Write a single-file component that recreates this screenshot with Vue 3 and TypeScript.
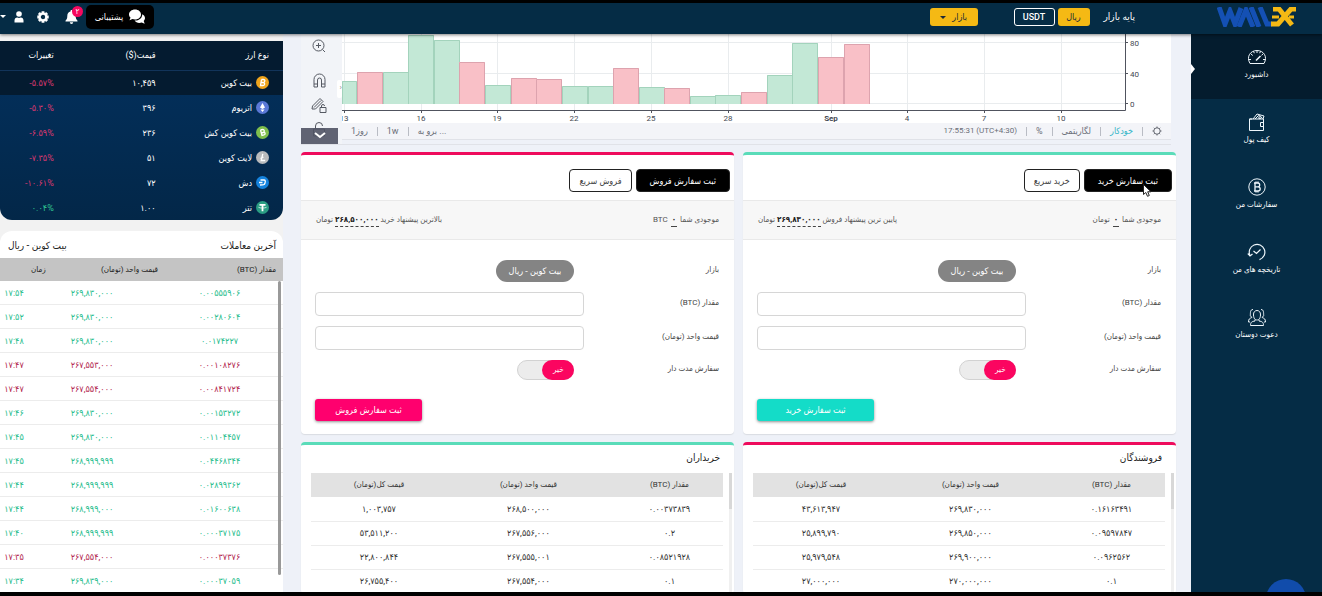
<script setup lang="ts">
import { ref } from 'vue'

interface Coin { id: string; name: string; price: string; change: string; up?: boolean; color: string }
interface Trade { amount: string; price: string; time: string; down?: boolean }
interface Bar { x: number; y: number; w?: number; down?: boolean }
interface OrderForm {
  id: string; kind: string; submit: string; quick: string; unit: string
  offerLabel: string; offer: string
}
interface Book { id: string; title: string; tone: string; rows: string[][] }

const menu = [
  { id: 'dash', label: 'داشبورد' },
  { id: 'wallet', label: 'کیف پول' },
  { id: 'orders', label: 'سفارشات من' },
  { id: 'history', label: 'تاریخچه های من' },
  { id: 'invite', label: 'دعوت دوستان' },
]

const coins: Coin[] = [
  { id: 'btc', name: 'بیت کوین', price: '۱۰,۴۵۹', change: '-۵.۵۷%', color: '#f0a51c' },
  { id: 'eth', name: 'اتریوم', price: '۳۹۶', change: '-۵.۳۰%', color: '#5a78d6' },
  { id: 'bch', name: 'بیت کوین کش', price: '۲۳۶', change: '-۶.۵۹%', color: '#7fbf4d' },
  { id: 'ltc', name: 'لایت کوین', price: '۵۱', change: '-۷.۳۵%', color: '#b9bbbd' },
  { id: 'dash', name: 'دش', price: '۷۲', change: '-۱۰.۶۱%', color: '#1583dd' },
  { id: 'usdt', name: 'تتر', price: '۱.۰۰', change: '۰.۰۴%', up: true, color: '#2a9d83' },
]

const trades: Trade[] = [
  { amount: '۰.۰۰۵۵۵۹۰۶', price: '۲۶۹,۸۳۰,۰۰۰', time: '۱۷:۵۴' },
  { amount: '۰.۰۰۲۸۰۶۰۴', price: '۲۶۹,۸۳۰,۰۰۰', time: '۱۷:۵۲' },
  { amount: '۰.۰۱۷۴۲۲۷', price: '۲۶۹,۸۳۰,۰۰۰', time: '۱۷:۴۸' },
  { amount: '۰.۰۰۱۰۸۲۷۶', price: '۲۶۷,۵۵۳,۰۰۰', time: '۱۷:۴۷', down: true },
  { amount: '۰.۰۰۸۴۱۷۲۴', price: '۲۶۷,۵۵۴,۰۰۰', time: '۱۷:۴۷', down: true },
  { amount: '۰.۰۰۱۵۳۲۷۲', price: '۲۶۹,۸۳۰,۰۰۰', time: '۱۷:۴۶' },
  { amount: '۰.۰۱۱۰۴۴۵۷', price: '۲۶۹,۸۳۰,۰۰۰', time: '۱۷:۴۵' },
  { amount: '۰.۰۴۴۶۸۳۴۴', price: '۲۶۸,۹۹۹,۹۹۹', time: '۱۷:۴۵' },
  { amount: '۰.۰۲۸۹۹۳۶۲', price: '۲۶۸,۹۹۹,۹۹۹', time: '۱۷:۴۴' },
  { amount: '۰.۰۱۶۰۰۶۳۸', price: '۲۶۸,۹۹۹,۰۰۰', time: '۱۷:۴۴' },
  { amount: '۰.۰۰۰۳۷۱۷۵', price: '۲۶۸,۹۹۹,۹۹۹', time: '۱۷:۴۰' },
  { amount: '۰.۰۰۰۳۷۳۷۶', price: '۲۶۷,۵۵۴,۰۰۰', time: '۱۷:۳۵', down: true },
  { amount: '۰.۰۰۰۳۷۰۵۹', price: '۲۶۹,۸۳۹,۰۰۰', time: '۱۷:۳۴' },
]

const baseline = 70
const barWidth = 26
const bars: Required<Bar>[] = ([
  { x: 0, y: 47, w: 15 }, { x: 15, y: 38, down: true }, { x: 41, y: 38 }, { x: 66, y: 1 },
  { x: 92, y: 6 }, { x: 117, y: 28, down: true }, { x: 143, y: 51 }, { x: 169, y: 44, down: true },
  { x: 194, y: 45, down: true }, { x: 220, y: 52 }, { x: 246, y: 52 }, { x: 271, y: 34, down: true },
  { x: 297, y: 53 }, { x: 322, y: 54, down: true }, { x: 348, y: 62 }, { x: 373, y: 61 },
  { x: 399, y: 58, down: true }, { x: 425, y: 41 }, { x: 450, y: 9 }, { x: 476, y: 23, down: true },
  { x: 502, y: 10, down: true },
] as Bar[]).map(b => ({ w: barWidth, down: false, ...b }))
const days = [
  { x: 2, t: '13' }, { x: 79, t: '16' }, { x: 155, t: '19' }, { x: 232, t: '22' }, { x: 309, t: '25' },
  { x: 386, t: '28' }, { x: 489, t: 'Sep' }, { x: 565, t: '4' }, { x: 642, t: '7' }, { x: 719, t: '10' },
]
const levels = [{ y: 9, t: '80' }, { y: 40, t: '40' }, { y: 70, t: '0' }]

const forms: OrderForm[] = [
  { id: 'buy', kind: 'ثبت سفارش خرید', submit: 'ثبت سفارش خرید', quick: 'خرید سریع', unit: 'تومان', offerLabel: 'پایین ترین پیشنهاد فروش', offer: '۲۶۹,۸۳۰,۰۰۰' },
  { id: 'sell', kind: 'ثبت سفارش فروش', submit: 'ثبت سفارش فروش', quick: 'فروش سریع', unit: 'BTC', offerLabel: 'بالاترین پیشنهاد خرید', offer: '۲۶۸,۵۰۰,۰۰۰' },
]

const books: Book[] = [
  {
    id: 'sellers', title: 'فروشندگان', tone: 'pink', rows: [
      ['۰.۱۶۱۶۳۴۹۱', '۲۶۹,۸۳۰,۰۰۰', '۴۳,۶۱۳,۹۴۷'],
      ['۰.۰۹۵۹۷۸۴۷', '۲۶۹,۸۵۰,۰۰۰', '۲۵,۸۹۹,۷۹۰'],
      ['۰.۰۹۶۲۵۶۲', '۲۶۹,۹۰۰,۰۰۰', '۲۵,۹۷۹,۵۴۸'],
      ['۰.۱', '۲۷۰,۰۰۰,۰۰۰', '۲۷,۰۰۰,۰۰۰'],
    ],
  },
  {
    id: 'buyers', title: 'خریداران', tone: 'teal', rows: [
      ['۰.۰۰۳۷۳۸۳۹', '۲۶۸,۵۰۰,۰۰۰', '۱,۰۰۳,۷۵۷'],
      ['۰.۲', '۲۶۷,۵۵۶,۰۰۰', '۵۳,۵۱۱,۲۰۰'],
      ['۰.۰۸۵۲۱۹۲۸', '۲۶۷,۵۵۵,۰۰۱', '۲۲,۸۰۰,۸۴۴'],
      ['۰.۱', '۲۶۷,۵۵۴,۰۰۰', '۲۶,۷۵۵,۴۰۰'],
    ],
  },
]

const timed = ref<Record<string, boolean>>({ buy: false, sell: false })
</script>

<template>
  <div class="page" dir="rtl">
    <header class="topbar">
      <a class="brand" href="#" aria-label="Wallex">
        <svg width="80" height="20" viewBox="0 0 80 20" fill="none" stroke-width="5">
          <g stroke="#1450b4">
            <path d="M2 0 8 17 13 4 18 17 24 1" />
            <path d="M22 20 29 3 36 20" />
            <path d="M34 0 42 20M43 0 50 17H55" />
          </g>
          <g stroke="#f5b914">
            <path d="M56 2H62L75 18" />
            <path d="M79 2H74L61 17H54" />
            <path d="M55 10H62M72 10H77" stroke-width="3" />
          </g>
        </svg>
      </a>
      <span class="base-label">پایه بازار</span>
      <button class="chip gold rial" type="button">ریال</button>
      <button class="chip outline" type="button">USDT</button>
      <button class="chip gold market" type="button">بازار <i class="caret"></i></button>
      <div class="tools">
        <button class="support" type="button">
          <svg width="16" height="16" viewBox="0 0 16 16" fill="#fff">
            <path d="M6 .5C9.500.5 12 2.700 12 5.500S9.500 10.500 6 10.500C5 10.500 4.200 10.300 3.500 10L.5 11.200 1.500 8.600C.6 7.700 0 6.700 0 5.500 0 2.700 2.600.5 6 .5Z" />
            <path d="M13.200 5.200C14.900 6 16 7.400 16 9c0 1.100-.5 2.200-1.300 3l1 2.700-3-1.200c-.7.3-1.500.4-2.400.4-2 0-3.800-.9-4.700-2.300C10 11.800 13.400 9 13.200 5.200Z" />
          </svg>
          پشتیبانی
        </button>
        <button class="icon-btn bell" type="button" aria-label="اعلان‌ها">
          <svg width="13" height="14" viewBox="0 0 13 14" fill="#fff">
            <path d="M6.500 0C7.100 0 7.500.4 7.500 1v.6C9.500 2 10.700 3.700 10.700 6c0 2.600.8 3.600 1.800 4.700v.8H.5v-.8C1.500 9.600 2.300 8.600 2.300 6c0-2.300 1.200-4 3.200-4.400V1c0-.6.4-1 1-1ZM4.800 12.300h3.400a1.700 1.700 0 0 1-3.400 0Z" />
          </svg>
          <span class="badge">۲</span>
        </button>
        <button class="icon-btn gear" type="button" aria-label="تنظیمات">
          <svg width="12" height="12" viewBox="0 0 12 12" fill="none" stroke="#fff">
            <circle cx="6" cy="6" r="3.400" stroke-width="2.400" />
            <path d="M6 .3V2M6 10V11.700M.3 6H2M10 6H11.700M1.900 1.900 3.200 3.200M8.800 8.800 10.100 10.100M10.100 1.900 8.800 3.200M3.200 8.800 1.900 10.100" stroke-width="2.800" />
          </svg>
        </button>
        <button class="icon-btn user" type="button" aria-label="حساب کاربری">
          <svg width="10" height="12" viewBox="0 0 10 12" fill="#fff">
            <circle cx="5" cy="3" r="2.800" />
            <path d="M.5 11.500V9.500C.5 7.600 1.700 6.500 3.200 6.500 4.300 7 5.700 7 6.800 6.500 8.300 6.500 9.500 7.600 9.500 9.500V11.500Z" />
          </svg>
          <i class="caret"></i>
        </button>
      </div>
    </header>

    <div class="shell">
      <nav class="sidebar">
        <a v-for="(m, i) in menu" :key="m.id" href="#" class="nav-item" :class="{ active: i === 0 }">
          <svg width="20" height="18" viewBox="0 0 20 18" fill="none" stroke="#eef6fb" stroke-width="1">
            <g v-if="m.id === 'dash'">
              <path d="M3 15.500C-1 8.500 3.500 2.500 10 2.500S21 8.500 17 15.500Z" />
              <path d="M10 2.500V5M4 6 5.800 7.500M16 6 14.500 7.300M1.500 11.500H4M16 11.500H18.500M6.500 3.300 7.300 5.200M13.500 3.300 12.700 5.200" />
              <path d="M9 12.500 13.500 8" stroke-width="1.600" />
            </g>
            <g v-else-if="m.id === 'wallet'">
              <path d="M2.500 6V17.500H16.500V6ZM16.500 9.500H13.500V13.500H16.500M2.500 6H5" />
              <path d="M6 6 10 1 17 3 16 6M8 6 11.500 2.500 14 6M11 4.500 13 6M12 1.700 15.500 5.500" />
            </g>
            <g v-else-if="m.id === 'orders'">
              <circle cx="10" cy="9" r="8.200" />
              <path d="M7 5H10.800C13.300 5 13.300 8.800 10.800 8.800H8M10.800 8.800C14 8.800 14 13 10.800 13H7M8 5V13M9 3.500V5M11 3.500V5M9 13V14.500M11 13V14.500" stroke-width="1.300" />
            </g>
            <g v-else-if="m.id === 'history'">
              <path d="M3 12.500A7.800 7.800 0 1 1 12.500 16.600" stroke-width="1.200" />
              <path d="M.8 10.500 3 13 5.500 11M6.500 8 9.500 10.500 13.500 6.500" stroke-width="1.200" />
            </g>
            <g v-else>
              <path d="M6.500 7C6 1 14 1 13.500 7 13.300 11 11.500 12 10 12S6.700 11 6.500 7Z" />
              <path d="M8 11.500V13C5 13.500 3.500 14 3.500 17.500H16.500C16.500 14 15 13.500 12 13V11.500" />
              <path d="M6 1.500C3 1.500 3.500 5 3.300 7.500L4.800 9.500C2.500 10.500 1.500 11 1.500 14H3M14 1.500C17 1.500 16.500 5 16.700 7.500L15.200 9.500C17.500 10.500 18.500 11 18.500 14H17" />
            </g>
          </svg>
          <span>{{ m.label }}</span>
        </a>
        <i class="bubble"></i>
      </nav>

      <main class="main">
        <section class="chart">
          <div class="draw-tools">
            <svg width="16" height="105" viewBox="0 0 16 105" fill="none" stroke="#555962" stroke-width="1">
              <circle cx="7.500" cy="11.500" r="5.500" />
              <path d="M7.500 9V14M5 11.500H10M11.500 15.500 14 18" />
              <path d="M3 53V45.500A5.500 5.500 0 0 1 14 45.500V53H10.500V46A2 2 0 0 0 6.500 46V53ZM3 50H6.500M10.500 50H14" />
              <path d="M1 75 1.500 72 9 64.500 12 67.500 4.500 75ZM3 73.500 10 66.500M9 73.500H15V78.500H9ZM10.500 73.500V72A1.500 1.500 0 0 1 13.500 72" />
              <path d="M4.500 95V92A3.500 3.500 0 0 1 11.500 92M2.500 95H13.500V102H2.500Z" />
            </svg>
            <button class="fold" type="button" aria-label="جمع کردن">
              <svg width="12" height="8" viewBox="0 0 12 8" fill="none" stroke="#fff" stroke-width="2"><path d="M1 1 6 5 11 1" /></svg>
            </button>
            <i class="handle">‹</i>
          </div>
          <div class="plot">
            <svg class="plot-svg" viewBox="0 0 829 89" direction="ltr">
              <g stroke="#e9ecee" stroke-width="1">
                <line v-for="d in days" :key="d.t" :x1="d.x + .5" :x2="d.x + .5" y1="0" y2="76" />
                <line v-for="l in levels" :key="l.t" x1="0" x2="783" :y1="l.y - .5" :y2="l.y - .5" />
              </g>
              <g v-for="b in bars" :key="b.x" :class="b.down ? 'fall' : 'rise'">
                <rect :x="b.x" :y="b.y" :width="b.w" :height="baseline - b.y" />
                <path :d="`M${b.x + .5} ${baseline}V${b.y + .5}H${b.x + b.w - .5}V${baseline}`" />
              </g>
              <path d="M0 76.500H783.500V0" fill="none" stroke="#50535e" />
              <g class="axis" text-anchor="middle">
                <template v-for="d in days" :key="d.t">
                  <path :d="`M${d.x + .5} 77V79`" stroke="#50535e" />
                  <text :x="d.x" y="87" :class="{ strong: d.t === 'Sep' }">{{ d.t }}</text>
                </template>
              </g>
              <g class="axis">
                <template v-for="l in levels" :key="l.t">
                  <path :d="`M784 ${l.y - .5}H786`" stroke="#50535e" />
                  <text x="788" :y="l.y + 3">{{ l.t }}</text>
                </template>
              </g>
            </svg>
            <div class="plot-foot">
              <div class="foot-group">
                <svg width="10" height="10" viewBox="0 0 10 10" fill="none" stroke="#666a73"><circle cx="5" cy="5" r="3.200" /><path d="M5 .5V2M5 8V9.500M.5 5H2M8 5H9.500M1.800 1.800 2.700 2.700M7.300 7.300 8.200 8.200M8.200 1.800 7.300 2.700M2.700 7.300 1.800 8.200" /></svg>
                <i class="sep"></i>
                <a href="#" class="auto">خودکار</a>
                <i class="sep"></i>
                <a href="#">لگاریتمی</a>
                <i class="sep"></i>
                <a href="#">%</a>
                <i class="sep"></i>
                <span class="clock" dir="ltr">17:55:31 (UTC+4:30)</span>
              </div>
              <div class="foot-group" dir="ltr">
                <a href="#">1<bdi>روز</bdi></a><i class="sep"></i><a href="#">1w</a><i class="sep"></i><a href="#"><bdi>برو به</bdi> ...</a>
              </div>
            </div>
          </div>
        </section>

        <div class="columns">
          <section v-for="f in forms" :key="f.id" class="card order" :class="f.id === 'buy' ? 'teal' : 'pink'">
            <div class="tabs">
              <button class="tab on" type="button">{{ f.kind }}</button>
              <button class="tab" type="button">{{ f.quick }}</button>
              <svg v-if="f.id === 'buy'" class="pointer" width="9" height="13" viewBox="0 0 9 13" fill="#fff" stroke="#222" stroke-width="1"><path d="M.5.5V10.500L2.800 8.500 4.500 12.300 6.300 11.500 4.700 7.800H8Z" /></svg>
            </div>
            <div class="strip">
              <span>موجودی شما <b class="dash zero">۰</b> {{ f.unit }}</span>
              <span>{{ f.offerLabel }} <b class="dash">{{ f.offer }}</b> تومان</span>
            </div>
            <form class="fields" @submit.prevent>
              <span class="lab">بازار</span>
              <div class="ctl"><span class="pill">بیت کوین - ریال</span></div>
              <label class="lab" :for="f.id + '-amount'">مقدار (BTC)</label>
              <input :id="f.id + '-amount'" class="box" type="text" />
              <label class="lab" :for="f.id + '-price'">قیمت واحد (تومان)</label>
              <input :id="f.id + '-price'" class="box" type="text" />
              <label class="lab" :for="f.id + '-timed'">سفارش مدت دار</label>
              <div class="ctl">
                <span class="toggle">
                  <input :id="f.id + '-timed'" v-model="timed[f.id]" type="checkbox" />
                  <span class="knob">خیر</span>
                </span>
              </div>
              <button class="submit" :class="f.id" type="submit">{{ f.submit }}</button>
            </form>
          </section>

          <section v-for="b in books" :key="b.id" class="card book" :class="b.tone">
            <h2>{{ b.title }}</h2>
            <table>
              <thead>
                <tr><th class="c1">مقدار (BTC)</th><th class="c2">قیمت واحد (تومان)</th><th class="c3">قیمت کل(تومان)</th></tr>
              </thead>
              <tbody>
                <tr v-for="(r, i) in b.rows" :key="i">
                  <td>{{ r[0] }}</td><td class="c2">{{ r[1] }}</td><td>{{ r[2] }}</td>
                </tr>
              </tbody>
            </table>
            <i class="track"></i>
          </section>
        </div>
      </main>

      <aside class="side">
        <table class="coins">
          <thead>
            <tr><th class="k1">نوع ارز</th><th class="k2">قیمت($)</th><th>تغییرات</th></tr>
          </thead>
          <tbody>
            <tr v-for="(c, i) in coins" :key="c.id" :class="{ sel: i === 0 }">
              <td class="k1">
                <span class="coin">
                  <svg width="13" height="13" viewBox="0 0 13 13" fill="none" stroke="#fff" stroke-width="1.300">
                    <circle cx="6.500" cy="6.500" r="6.500" :fill="c.color" stroke="none" />
                    <path v-if="c.id === 'btc'" d="M5.500 3.500 4.500 9.500H7C9.200 9.500 9.200 6.500 7 6.500H5.200M5.500 3.500H7.500C9.500 3.500 9.300 6.500 7 6.500" />
                    <path v-else-if="c.id === 'eth'" d="M6.500 2 9 6.500 6.500 8 4 6.500ZM4.500 8.500 6.500 11 8.500 8.500" fill="#fff" stroke="none" />
                    <path v-else-if="c.id === 'bch'" d="M4.500 4 6 9.500 8 9C10 8.300 9.200 6 7.300 6.500L5.500 7M4.500 4 6.500 3.500C8.300 3 9 5.800 7.300 6.500" />
                    <path v-else-if="c.id === 'ltc'" d="M6.800 2.800 5.200 9.500H9.200M4.500 7.500 7.500 6" />
                    <path v-else-if="c.id === 'dash'" d="M4.500 4H8C9.500 4 9.500 5.500 9 7 8.500 9 7.500 9 4 9M3 6.500H6.500" />
                    <g v-else><path d="M3.500 3.800H9.500M6.500 4V10.200" stroke-width="1.800" /><path d="M2.500 6.300C4 7.300 9 7.300 10.500 6.300" stroke-width=".7" /></g>
                  </svg>
                  {{ c.name }}
                </span>
              </td>
              <td class="k2"><span dir="ltr">{{ c.price }}</span></td>
              <td :class="c.up ? 'up' : 'down'"><bdo dir="ltr">{{ c.change }}</bdo></td>
            </tr>
          </tbody>
        </table>

        <section class="trades">
          <header><h2>آخرین معاملات</h2><h2>بیت کوین - ریال</h2></header>
          <table>
            <thead>
              <tr><th>مقدار (BTC)</th><th>قیمت واحد (تومان)</th><th>زمان</th></tr>
            </thead>
            <tbody>
              <tr v-for="(t, i) in trades" :key="i" :class="{ fell: t.down }">
                <td>{{ t.amount }}</td><td>{{ t.price }}</td><td>{{ t.time }}</td>
              </tr>
            </tbody>
          </table>
          <i class="thumb"></i>
        </section>
      </aside>
    </div>
  </div>
</template>

<style>
body { background: #000; }
</style>

<style scoped>
.page {
  box-sizing: border-box;
  display: flex;
  flex-direction: column;
  height: 100vh;
  overflow: hidden;
  border-top: 3px solid #000;
  border-bottom: 4px solid #000;
  background: #eef1f8;
  font-family: Roboto, "DejaVu Sans Condensed", "DejaVu Sans", sans-serif;
  font-size: 8px;
  line-height: 14px;
  color: #333;
}
.page *, .page *::before, .page *::after { box-sizing: border-box; }
button, input { font: inherit; color: inherit; }
button { padding: 0; border: 0; background: none; cursor: pointer; white-space: nowrap; }
a { color: inherit; text-decoration: none; }
h2 { margin: 0; font-size: 10px; font-weight: 400; line-height: 16px; color: #222; }
table { border-collapse: collapse; border-spacing: 0; }
th, td { padding: 0; font-weight: 400; white-space: nowrap; }
td { font-size: 9px; }
i { font-style: normal; }

.topbar {
  position: relative;
  z-index: 2;
  flex: 0 0 31px;
  display: flex;
  align-items: center;
  padding-bottom: 4px;
  background: #052c45;
  box-shadow: 0 1px 3px rgba(0, 0, 0, .5);
  color: #fff;
}
.brand { width: 131px; display: flex; justify-content: center; }
.base-label { margin-inline: 56px 14px; font-size: 10px; }
.chip { height: 18px; border-radius: 3px; font-size: 9px; line-height: 16px; }
.gold { background: #f5b914; color: #1f2a36; }
.rial { width: 32px; }
.outline { width: 41px; margin-inline: 3px 36px; border: 1px solid #fff; font-weight: 500; }
.market { width: 48px; }
.caret {
  display: inline-block;
  border: 3px solid transparent;
  border-top-color: currentColor;
  border-bottom: 0;
  vertical-align: middle;
  margin-inline-start: 4px;
}
.tools { display: flex; align-items: center; margin-inline-start: auto; }
.support {
  display: flex;
  align-items: center;
  justify-content: center;
  gap: 6px;
  width: 68px;
  height: 24px;
  border-radius: 5px;
  background: #000;
  font-size: 9px;
}
.icon-btn { position: relative; display: flex; align-items: center; color: #fff; }
.bell { margin-inline-start: 8px; }
.badge {
  position: absolute;
  top: -4px;
  left: 7px;
  width: 11px;
  height: 11px;
  border-radius: 50%;
  background: #f6095f;
  font-size: 8px;
  line-height: 11px;
  text-align: center;
}
.gear { margin-inline-start: 16px; }
.user { margin-inline-start: 13px; gap: 4px; }

.shell {
  flex: 1;
  min-height: 0;
  display: grid;
  grid-template-columns: 131px minmax(0, 1fr) 283px;
}

.sidebar { position: relative; overflow: hidden; background: #052c45; color: #fff; }
.nav-item {
  position: relative;
  display: flex;
  flex-direction: column;
  align-items: center;
  gap: 2px;
  height: 65px;
  padding-top: 14px;
}
.active { background: #041c2e; }
.active::after {
  content: "";
  position: absolute;
  top: 30px;
  right: 127px;
  border: 5px solid transparent;
  border-left: 4px solid #fff;
  border-right: 0;
}
.bubble {
  position: absolute;
  right: 16px;
  bottom: -26px;
  width: 40px;
  height: 40px;
  border-radius: 50%;
  background: #114cab;
}

.main { min-width: 0; overflow: hidden; padding-inline: 15px 18px; }
.chart {
  display: flex;
  flex-direction: row-reverse;
  margin-inline-start: 5px;
  margin-bottom: 7px;
  border-bottom: 1px solid #e0e2e8;
}
.draw-tools {
  position: relative;
  flex: 0 0 41px;
  padding-right: 5px;
  display: flex;
  justify-content: center;
  background: #f2f4f8;
}
.fold {
  position: absolute;
  left: 0;
  bottom: 0;
  display: flex;
  align-items: center;
  justify-content: center;
  width: 37px;
  height: 16px;
  background: rgba(80, 83, 100, .9);
}
.handle {
  position: absolute;
  right: 0;
  top: 46px;
  width: 5px;
  height: 18px;
  border-radius: 2px;
  background: #fff;
  line-height: 16px;
  color: #888;
}
.plot { flex: 1; min-width: 0; margin-bottom: 4px; background: #fff; border-bottom: 1px solid #e0e2e8; }
.plot-svg { display: block; width: 100%; overflow: visible; }
.rise rect { fill: #c3e8d6; }
.rise path { fill: none; stroke: #a3d3bc; }
.fall rect { fill: #f9c0c7; }
.fall path { fill: none; stroke: #dda3ae; }
.axis text { font-size: 8px; fill: #444852; }
.axis .strong { font-weight: 700; }
.plot-foot {
  display: flex;
  justify-content: space-between;
  height: 16px;
  padding-inline: 9px;
  background: #f3f4f8;
  font-size: 9px;
  color: #6b6f78;
}
.foot-group { display: flex; align-items: center; gap: 9px; }
.clock { font-size: 8px; }
.sep { width: 1px; height: 9px; background: #b9bcc4; }
.auto { color: #35b6c8; }

.columns { display: grid; grid-template-columns: repeat(2, minmax(0, 1fr)); gap: 8px 9px; }
.card { position: relative; border-radius: 4px; background: #fff; border-top: 3px solid; box-shadow: 0 1px 1px #d9dce2; }
.teal { border-color: #5adcb9; }
.pink { border-color: #ee0b5c; }
.tabs { position: relative; display: flex; gap: 4px; height: 45px; padding: 14px 4px 0; }
.tab {
  height: 23px;
  padding: 0 9px;
  border: 1px solid #222;
  border-radius: 4px;
  font-size: 9px;
  color: #444;
}
.tab.on { padding-inline: 13px; background: #000; color: #fff; }
.pointer { position: absolute; right: 24px; top: 29px; }
.strip {
  display: flex;
  justify-content: space-between;
  align-items: center;
  height: 40px;
  padding-inline: 15px;
  background: #f7f7f7;
  border-block: 1px solid #e9e9e9;
  color: #555;
}
.dash { padding-bottom: 2px; border-bottom: 1px dashed #444; color: #222; }
.zero { padding-inline: 1px; margin-inline: 1px; }
.fields {
  display: grid;
  grid-template-columns: minmax(0, 1fr) minmax(0, 2fr);
  row-gap: 10px;
  align-items: center;
  padding: 20px 15px 13px 14px;
  color: #444;
}
.lab { padding-bottom: 2px; }
.ctl { display: flex; padding-inline-start: 10px; }
.pill {
  padding: 0 13px;
  border-radius: 11px;
  background: #848484;
  font-size: 9px;
  color: #fff;
  line-height: 22px;
}
.box { width: 100%; height: 24px; border: 1px solid #d6d6d6; border-radius: 4px; background: #fff; }
.toggle { display: grid; width: 57px; height: 20px; }
.toggle > * { grid-area: 1 / 1; }
.toggle input { appearance: none; width: 57px; height: 20px; margin: 0; border: 1px solid #d2d2d2; border-radius: 10px; background: #ececec; }
.knob { width: 32px; border-radius: 10px; background: #fb0560; color: #fff; line-height: 20px; text-align: center; pointer-events: none; }
.submit {
  grid-column: 1 / -1;
  justify-self: end;
  width: 107px;
  height: 22px;
  margin-top: 9px;
  border-radius: 3px;
  background: #ff006e;
  box-shadow: 0 1px 3px rgba(0, 0, 0, .45);
  font-size: 9px;
  color: #fff;
}
.submit.buy { width: 117px; background: #14dcc8; }

.book { padding: 0 11px 0 10px; }
.book h2 { padding: 5px 3px 7px; }
.book table { width: 100%; table-layout: fixed; text-align: center; }
.book thead tr { height: 24px; background: #e2e2e2; }
.book tbody tr { height: 24px; border-bottom: 1px solid #ececec; }
.book .c1 { width: 26%; }
.book .c2 { padding-inline-end: 0; padding-inline-start: 6px; }
.book .c3 { width: 33%; }
.track {
  position: absolute;
  right: 2px;
  top: 28px;
  bottom: 0;
  width: 3px;
  background: linear-gradient(#d8d8d8 36px, #f0f0f0 36px);
}

.side { min-width: 0; display: flex; flex-direction: column; gap: 11px; padding-top: 7px; background: #f2f2f2; }
.coins {
  flex: none;
  width: 100%;
  table-layout: fixed;
  border-radius: 0 0 12px 12px;
  overflow: hidden;
  background: linear-gradient(#03315f, #032748);
  color: #fff;
}
.coins th, .coins td { text-align: start; font-size: 9px; }
.coins thead tr { height: 29px; background: #041b30; border-bottom: 1px solid #12345a; }
.coins tbody tr { height: 25px; }
.coins .sel { background: #041b30; }
.coins .k1 { width: 45%; padding-inline-start: 14px; }
.coins .k2 { width: 36%; }
.coin { display: flex; align-items: center; gap: 4px; }
.coins .up { color: #2fc492; }
.coins .down { color: #d8386f; }

.trades {
  position: relative;
  flex: 1;
  min-height: 0;
  overflow: hidden;
  border-radius: 12px 12px 0 0;
  background: #fff;
}
.trades header { display: flex; justify-content: space-between; padding: 7px 7px 4px 8px; }
.trades table, .trades thead, .trades tbody { display: block; }
.trades tr { display: grid; align-items: center; }
.trades thead tr {
  grid-template-columns: 121fr 115fr 47fr;
  height: 23px;
  padding-inline-start: 7px;
  background: #c4c4c4;
  color: #222;
}
.trades th { text-align: start; }
.trades tbody tr {
  grid-template-columns: 127fr 128fr 28fr;
  height: 24px;
  border-bottom: 1px solid #ececec;
  text-align: center;
  color: #27bd8d;
}
.trades tbody .fell { color: #b3264f; }
.thumb { position: absolute; right: 2px; top: 50px; bottom: 18px; width: 3px; border-radius: 2px; background: #999; }
</style>
